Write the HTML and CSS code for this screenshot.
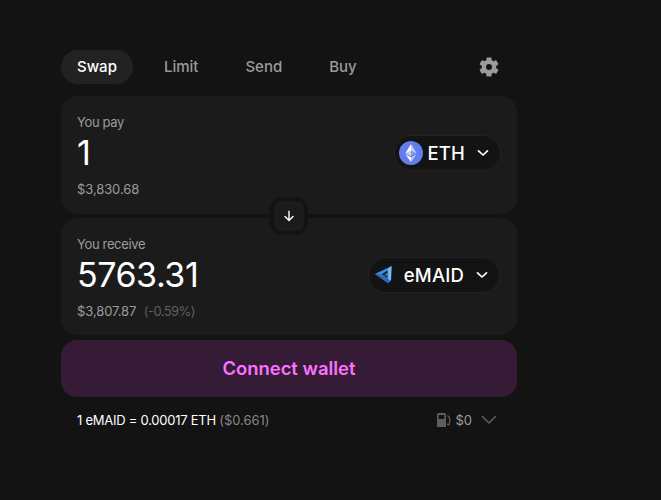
FILE: index.html
```html
<!DOCTYPE html>
<html lang="en">
<head>
<meta charset="utf-8">
<title>Swap</title>
<link rel="stylesheet" href="styles.css">
</head>
<body>
<main class="swap">
  <nav class="tabs">
    <span class="tab active">Swap</span>
    <span class="tab">Limit</span>
    <span class="tab">Send</span>
    <span class="tab">Buy</span>
    <svg class="gear" viewBox="0 0 24 24" width="24" height="24"><path fill="#9b9b9b" fill-rule="evenodd" d="M19.14 12.94c.04-.3.06-.61.06-.94s-.02-.64-.07-.94l2.03-1.58a.49.49 0 0 0 .12-.61l-1.92-3.32a.49.49 0 0 0-.59-.22l-2.39.96a7 7 0 0 0-1.62-.94l-.36-2.54a.48.48 0 0 0-.48-.41h-3.84a.48.48 0 0 0-.47.41l-.36 2.54c-.59.24-1.13.57-1.62.94l-2.39-.96a.49.49 0 0 0-.59.22L2.74 8.87a.48.48 0 0 0 .12.61l2.03 1.58c-.05.3-.09.63-.09.94s.02.64.07.94l-2.03 1.58a.49.49 0 0 0-.12.61l1.92 3.32c.12.22.37.29.59.22l2.39-.96c.5.38 1.03.7 1.62.94l.36 2.54c.05.24.24.41.48.41h3.84c.24 0 .44-.17.47-.41l.36-2.54a7 7 0 0 0 1.62-.94l2.39.96c.22.08.47 0 .59-.22l1.92-3.32a.48.48 0 0 0-.12-.61zM12 15a3 3 0 1 1 0-6 3 3 0 0 1 0 6z"/></svg>
  </nav>

  <div class="panels">
    <section class="panel pay">
      <div class="label">You pay</div>
      <div class="row">
        <div class="amount">1</div>
        <button class="token eth">
          <svg class="token-icon" viewBox="0 0 24 24" width="24" height="24">
            <circle cx="12" cy="12" r="12" fill="#627eea"/>
            <path fill="#fff" fill-opacity=".6" d="M12 3v6.65l5.62 2.51z"/>
            <path fill="#fff" d="M12 3 6.38 12.16 12 9.65z"/>
            <path fill="#fff" fill-opacity=".6" d="M12 16.48v4.52l5.62-7.78z"/>
            <path fill="#fff" d="M12 16.48v4.52l-5.62-7.78z"/>
            <path fill="#fff" fill-opacity=".2" d="m12 15.43 5.62-3.27L12 9.65z"/>
            <path fill="#fff" fill-opacity=".6" d="M6.38 12.16 12 15.43V9.65z"/>
          </svg>
          <span>ETH</span>
          <svg class="chev" viewBox="0 0 12 8" width="12" height="8"><path d="M1.5 1.8 6 6l4.500-4.200" fill="none" stroke="#fff" stroke-width="1.700" stroke-linecap="round" stroke-linejoin="round"/></svg>
        </button>
      </div>
      <div class="fiat">$3,830.68</div>
    </section>

    <section class="panel receive">
      <div class="label">You receive</div>
      <div class="row">
        <div class="amount">5763.31</div>
        <button class="token maid">
          <svg class="token-icon" viewBox="0 0 24 24" width="24" height="24">
            <path fill="#3f8fe6" d="M18.500 3 2 11l13 9 3-2.500z"/>
            <path fill="#2a69bd" d="M2 11l13 9 3-2.500L6.500 11z"/>
            <path fill="#74bcf6" d="M18.500 3 15 6l.5 10.500 2.500 1z"/>
            <path fill="#17222e" d="M14.500 7.500 8.500 11.300l6 3.700z"/>
            <path fill="#3f8fe6" d="M14.500 10 11.500 11.500l3 1.800z"/>
          </svg>
          <span>eMAID</span>
          <svg class="chev" viewBox="0 0 12 8" width="12" height="8"><path d="M1.5 1.8 6 6l4.500-4.200" fill="none" stroke="#fff" stroke-width="1.700" stroke-linecap="round" stroke-linejoin="round"/></svg>
        </button>
      </div>
      <div class="fiat">$3,807.87 <span class="impact">(-0.59%)</span></div>
    </section>

    <div class="flip">
      <svg viewBox="0 0 12 12" width="12" height="12"><path d="M6 1.200v9.300M2 6.600l4 4 4-4" fill="none" stroke="#fff" stroke-width="1.400" stroke-linecap="round" stroke-linejoin="round"/></svg>
    </div>
  </div>

  <button class="connect">Connect wallet</button>

  <footer class="rate">
    <div class="price">1 eMAID = 0.00017 ETH <span class="usd">($0.661)</span></div>
    <div class="gas">
      <svg viewBox="0 0 16 16" width="16" height="16"><path fill="#5e5e5e" fill-rule="evenodd" d="M1 2.500A1.500 1.500 0 0 1 2.500 1h6A1.500 1.500 0 0 1 10 2.500V15H1zM2.700 3v4h5.600V3z"/><path d="M11.500 3.500c2.500 1.800 2.500 6 1.800 8.500-.4 1.300-2 .9-1.800-.4" fill="none" stroke="#5e5e5e" stroke-width="1.300"/></svg>
      <span>$0</span>
      <svg class="gas-chev" viewBox="0 0 16 10" width="16" height="10"><path d="M1.500 1.500 8 8l6.500-6.500" fill="none" stroke="#5e5e5e" stroke-width="1.600" stroke-linecap="round" stroke-linejoin="round"/></svg>
    </div>
  </footer>
</main>
</body>
</html>
```

FILE: styles.css
```css
* { box-sizing: border-box; }
html, body { margin: 0; height: 100%; }
body {
  background: #131313;
  font-family: Inter, "Liberation Sans", sans-serif;
  color: #fff;
  padding: 50px 0 0 61px;
  overflow: hidden;
}
.swap { width: 456px; }
.tabs {
  display: flex;
  align-items: center;
  height: 34px;
  gap: 15px;
  margin-bottom: 12px;
}
.tab {
  display: block;
  padding: 0 16px;
  line-height: 34px;
  font-size: 15px;
  font-weight: 500;
  color: #9b9b9b;
  border-radius: 17px;
}
.tab.active { color: #fff; background: #222; }
.gear { margin-left: auto; margin-right: 16px; }
.panels {
  position: relative;
  display: flex;
  flex-direction: column;
  gap: 4px;
}
.panel {
  background: #1b1b1b;
  border-radius: 16px;
  padding: 18px 16px 0;
  height: 118px;
}
.receive { height: 117px; }
.label {
  font-size: 13px;
  line-height: 16px;
  letter-spacing: -0.35px;
  color: #9b9b9b;
}
.row {
  display: flex;
  align-items: center;
  justify-content: space-between;
  height: 36px;
  margin-top: 4px;
}
.amount {
  font-size: 34px;
  line-height: 36px;
  letter-spacing: -0.45px;
  padding-top: 2px;
}
.token {
  display: flex;
  align-items: center;
  height: 36px;
  border: 1px solid #222;
  border-radius: 18px;
  background: #131313;
  color: #fff;
  font: 500 18.5px Inter, "Liberation Sans", sans-serif;
  letter-spacing: 0.2px;
  padding: 0 11px 0 4px;
  margin-top: 2px;
}
.token-icon { margin-right: 4px; }
.chev { margin-left: 12px; }
.maid { margin-right: 1px; }
.maid .token-icon { margin-right: 7px; }
.fiat {
  font-size: 13px;
  line-height: 16px;
  letter-spacing: -0.1px;
  margin-top: 11px;
  color: #9b9b9b;
}
.impact { color: #5e5e5e; margin-left: 4px; letter-spacing: -0.55px; }
.flip {
  position: absolute;
  left: 209px;
  top: 101px;
  width: 38px;
  height: 38px;
  display: flex;
  align-items: center;
  justify-content: center;
  background: #1b1b1b;
  border: 4px solid #131313;
  border-radius: 12px;
}
.connect {
  display: block;
  width: 100%;
  height: 57px;
  margin-top: 5px;
  padding: 0 0 2px;
  border: 0;
  border-radius: 16px;
  background: #351b35;
  color: #fc72ff;
  font: 600 18.4px Inter, "Liberation Sans", sans-serif;
}
.rate {
  display: flex;
  align-items: center;
  justify-content: space-between;
  height: 20px;
  margin-top: 13px;
  padding: 0 20px 0 16px;
  font-size: 13px;
  letter-spacing: -0.25px;
}
.usd { color: #868686; letter-spacing: -0.05px; }
.gas {
  display: flex;
  align-items: center;
  gap: 3px;
  color: #9b9b9b;
  letter-spacing: 0;
}
.gas-chev { margin-left: 6px; }
```
